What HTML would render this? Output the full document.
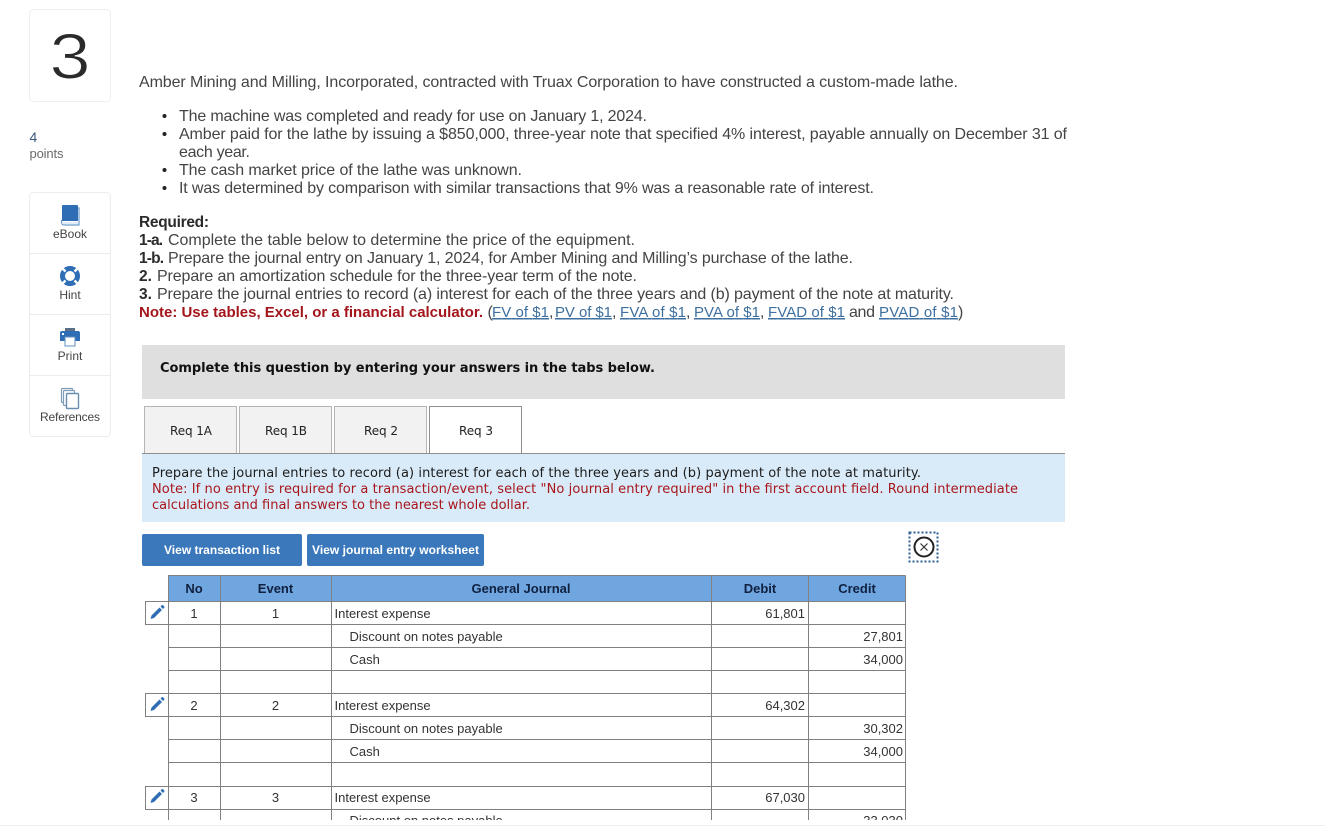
<!DOCTYPE html>
<html lang="en"><head><meta charset="utf-8"><title>Question 3</title>
<style>
html,body{margin:0;padding:0;background:#fff;width:1325px;height:826px;overflow:hidden}
svg{display:block}
.b{font:16px "Liberation Sans",sans-serif;fill:#444}
.bb{font:bold 15.500px "Liberation Sans",sans-serif;fill:#2b2b2b}
.r{font:bold 15px "Liberation Sans",sans-serif;fill:#a3161c}
.l{font:15px "Liberation Sans",sans-serif;fill:#3d6f9f;text-decoration:underline}
.s{font:12px "Liberation Sans",sans-serif;fill:#444;text-anchor:middle}
.v{font:13px "DejaVu Sans",sans-serif;fill:#222}
.q{font:12px "DejaVu Sans",sans-serif;fill:#222}
.t{font:13px "Liberation Sans",sans-serif;fill:#333}
.m{text-anchor:middle}.e{text-anchor:end}
.h{font:bold 13px "Liberation Sans",sans-serif;fill:#10203f;text-anchor:middle}
.w{font:bold 12px "Liberation Sans",sans-serif;fill:#fff}
.g{stroke:#808080;stroke-width:1;fill:none;shape-rendering:crispEdges}
</style></head><body>
<svg width="1325" height="826" viewBox="0 0 1325 826" xmlns="http://www.w3.org/2000/svg">
<defs><clipPath id="c"><rect x="140" y="570" width="780" height="250"/></clipPath></defs>

<!-- sidebar -->
<rect x="29.500" y="9.500" width="81" height="92" rx="4" fill="#fff" stroke="#efefef"/>
<text x="49.500" y="78.500" textLength="41" lengthAdjust="spacingAndGlyphs" style="font:64px 'Liberation Sans',sans-serif;fill:#2a2a2a;stroke:#fff;stroke-width:1">3</text>
<text x="29.500" y="142" style="font:14px 'Liberation Sans',sans-serif;fill:#3b5a7c">4</text>
<text x="29.500" y="158" textLength="34" style="font:13px 'Liberation Sans',sans-serif;fill:#6b6b6b">points</text>
<rect x="29.500" y="192.500" width="81" height="244" rx="4" fill="#fff" stroke="#ececec"/>
<path d="M30 253.500H110M30 314.500H110M30 375.500H110" stroke="#ececec"/>

<path d="M62 206a1 1 0 0 1 1-1h14a1 1 0 0 1 1 1v15H62z" fill="#2f6db5"/>
<path d="M78 208h1v17H64a2.500 2.500 0 0 1-2.500-2.500V220" fill="none" stroke="#6d9bcc" stroke-width="1.200"/>
<path d="M63 223h15" stroke="#c4d7ec" stroke-width="1"/>
<text class="s" x="70" y="238">eBook</text>

<circle cx="70" cy="276" r="7.500" fill="none" stroke="#2f6db5" stroke-width="5"/>
<path d="M65.500 271.500l-3.500-3.500M74.500 271.500l3.500-3.500M65.500 280.500l-3.500 3.500M74.500 280.500l3.500 3.500" stroke="#fff" stroke-width="2.400"/>
<text class="s" x="70" y="299">Hint</text>

<rect x="65" y="328" width="10" height="3" fill="#5b6f86"/>
<path d="M62 331h16a2 2 0 0 1 2 2v8h-20v-8a2 2 0 0 1 2-2z" fill="#2f6db5"/>
<rect x="65" y="337" width="10" height="9" fill="#fff" stroke="#5f8fbf"/>
<rect x="62" y="333" width="2" height="2" fill="#fff"/>
<text class="s" x="70" y="360">Print</text>

<rect x="61.500" y="388.500" width="11" height="14" rx="1" fill="#fff" stroke="#7f9db9" stroke-width="1.200"/>
<rect x="63.500" y="390.500" width="11" height="15" rx="1" fill="#fff" stroke="#7f9db9" stroke-width="1.200"/>
<rect x="66.500" y="393.500" width="12" height="15" rx="1" fill="#fff" stroke="#6a8fb2" stroke-width="1.400"/>
<text class="s" x="70" y="421" textLength="60">References</text>

<!-- intro -->
<text class="b" x="139" y="87" textLength="819">Amber Mining and Milling, Incorporated, contracted with Truax Corporation to have constructed a custom-made lathe.</text>
<circle cx="164.500" cy="116" r="2" fill="#222"/><circle cx="164.500" cy="134" r="2" fill="#222"/><circle cx="164.500" cy="170" r="2" fill="#222"/><circle cx="164.500" cy="188" r="2" fill="#222"/>
<text class="b" x="179" y="121" textLength="468">The machine was completed and ready for use on January 1, 2024.</text>
<text class="b" x="179" y="139" textLength="888">Amber paid for the lathe by issuing a $850,000, three-year note that specified 4% interest, payable annually on December 31 of</text>
<text class="b" x="179" y="157" textLength="71">each year.</text>
<text class="b" x="179" y="175" textLength="343">The cash market price of the lathe was unknown.</text>
<text class="b" x="179" y="193" textLength="695">It was determined by comparison with similar transactions that 9% was a reasonable rate of interest.</text>

<text class="bb" x="139" y="227" textLength="70">Required:</text>
<text class="bb" x="139" y="245" textLength="24">1-a.</text><text class="b" x="168" y="245" textLength="467">Complete the table below to determine the price of the equipment.</text>
<text class="bb" x="139" y="263" textLength="25">1-b.</text><text class="b" x="168" y="263" textLength="685">Prepare the journal entry on January 1, 2024, for Amber Mining and Milling’s purchase of the lathe.</text>
<text class="bb" x="139" y="281">2.</text><text class="b" x="157" y="281" textLength="480">Prepare an amortization schedule for the three-year term of the note.</text>
<text class="bb" x="139" y="299">3.</text><text class="b" x="157" y="299" textLength="797">Prepare the journal entries to record (a) interest for each of the three years and (b) payment of the note at maturity.</text>
<text class="r" x="139" y="317" textLength="344">Note: Use tables, Excel, or a financial calculator.</text>
<text class="b" x="487.500" y="317">(</text>
<text class="l" x="492" y="317" textLength="57">FV of $1</text><text class="b" x="549" y="317">,</text>
<text class="l" x="555" y="317" textLength="57">PV of $1</text><text class="b" x="612" y="317">,</text>
<text class="l" x="620" y="317" textLength="66">FVA of $1</text><text class="b" x="686" y="317">,</text>
<text class="l" x="694" y="317" textLength="66">PVA of $1</text><text class="b" x="760" y="317">,</text>
<text class="l" x="768" y="317" textLength="77">FVAD of $1</text>
<text class="b" x="849" y="317" textLength="26">and</text>
<text class="l" x="879" y="317" textLength="79">PVAD of $1</text><text class="b" x="958" y="317">)</text>

<!-- banner -->
<rect x="142" y="345" width="923" height="54" fill="#dfdfdf"/>
<text x="160" y="372" textLength="495" style="font:bold 13px 'DejaVu Sans',sans-serif;fill:#111">Complete this question by entering your answers in the tabs below.</text>

<!-- tabs -->
<g fill="#f2f2f2" stroke="#b5b5b5" shape-rendering="crispEdges">
<rect x="144.500" y="406.500" width="92" height="47"/>
<rect x="239.500" y="406.500" width="92" height="47"/>
<rect x="334.500" y="406.500" width="92" height="47"/>
</g>
<rect x="429.500" y="406.500" width="92" height="47" fill="#fff" stroke="#8f8f8f" shape-rendering="crispEdges"/>
<path d="M142 453.500H429.500M521.500 453.500H1065" stroke="#8f8f8f" shape-rendering="crispEdges"/>
<text class="q" x="170" y="435" textLength="42">Req 1A</text>
<text class="q" x="265" y="435" textLength="42">Req 1B</text>
<text class="q" x="364" y="435" textLength="34">Req 2</text>
<text class="q" x="459" y="435" textLength="34">Req 3</text>

<!-- info -->
<rect x="142" y="454" width="923" height="68" fill="#d9ebf8"/>
<text class="v" x="152" y="477" textLength="769" style="fill:#1c1c1c">Prepare the journal entries to record (a) interest for each of the three years and (b) payment of the note at maturity.</text>
<text class="v" x="152" y="493" textLength="866" style="fill:#a8161c">Note: If no entry is required for a transaction/event, select "No journal entry required" in the first account field. Round intermediate</text>
<text class="v" x="152" y="509" textLength="378" style="fill:#a8161c">calculations and final answers to the nearest whole dollar.</text>

<!-- buttons -->
<rect x="142" y="534" width="160" height="32" rx="2" fill="#3a78bb"/>
<rect x="307" y="534" width="177" height="32" rx="2" fill="#3a78bb"/>
<text class="w" x="164" y="554" textLength="116">View transaction list</text>
<text class="w" x="312" y="554" textLength="167">View journal entry worksheet</text>

<!-- close -->
<rect x="909.500" y="532.500" width="28" height="29" fill="none" stroke="#2f5f8c" stroke-width="2" stroke-dasharray="2 2"/>
<circle cx="924" cy="547" r="9.500" fill="none" stroke="#222" stroke-width="2"/>
<path d="M920.500 543.500l7 7M927.500 543.500l-7 7" stroke="#333" stroke-width="1.200"/>

<!-- table -->
<g clip-path="url(#c)">
<rect x="168" y="575" width="737" height="26" fill="#6fa6e0"/>
<path class="g" d="M168.500 575.500H905.500M168.500 601.500H905.500M168.500 624.500H905.500M168.500 647.500H905.500M168.500 670.500H905.500M168.500 693.500H905.500M168.500 716.500H905.500M168.500 739.500H905.500M168.500 762.500H905.500M168.500 786.500H905.500M168.500 809.500H905.500"/>
<path class="g" d="M168.500 575.500V830M220.500 575.500V830M331.500 575.500V830M711.500 575.500V830M808.500 575.500V830M905.500 575.500V830"/>
<path class="g" d="M168.500 601.500H145.500V624.500H168.500M168.500 693.500H145.500V716.500H168.500M168.500 786.500H145.500V809.500H168.500"/>

<g fill="#2f6db5">
<path d="M151.500 615.500l8-8 2.500 2.500-8 8-3.500 1z"/><path d="M160.500 606.500l1.200-1.200a1 1 0 0 1 1.400 0l1.100 1.100a1 1 0 0 1 0 1.400l-1.200 1.200z"/>
<path d="M151.500 707.500l8-8 2.500 2.500-8 8-3.500 1z"/><path d="M160.500 698.500l1.200-1.200a1 1 0 0 1 1.400 0l1.100 1.100a1 1 0 0 1 0 1.400l-1.200 1.200z"/>
<path d="M151.500 799.500l8-8 2.500 2.500-8 8-3.500 1z"/><path d="M160.500 790.500l1.200-1.200a1 1 0 0 1 1.400 0l1.100 1.100a1 1 0 0 1 0 1.400l-1.200 1.200z"/>
</g>

<text class="h" x="194" y="593">No</text><text class="h" x="275.500" y="593">Event</text><text class="h" x="521" y="593">General Journal</text><text class="h" x="760" y="593">Debit</text><text class="h" x="857" y="593">Credit</text>

<text class="t m" x="194" y="618">1</text><text class="t m" x="275.500" y="618">1</text><text class="t" x="334.500" y="618">Interest expense</text><text class="t e" x="805" y="618">61,801</text>
<text class="t" x="349.500" y="641">Discount on notes payable</text><text class="t e" x="903" y="641">27,801</text>
<text class="t" x="349.500" y="664">Cash</text><text class="t e" x="903" y="664">34,000</text>

<text class="t m" x="194" y="710">2</text><text class="t m" x="275.500" y="710">2</text><text class="t" x="334.500" y="710">Interest expense</text><text class="t e" x="805" y="710">64,302</text>
<text class="t" x="349.500" y="733">Discount on notes payable</text><text class="t e" x="903" y="733">30,302</text>
<text class="t" x="349.500" y="756">Cash</text><text class="t e" x="903" y="756">34,000</text>

<text class="t m" x="194" y="802">3</text><text class="t m" x="275.500" y="802">3</text><text class="t" x="334.500" y="802">Interest expense</text><text class="t e" x="805" y="802">67,030</text>
<text class="t" x="349.500" y="825">Discount on notes payable</text><text class="t e" x="903" y="825">33,030</text>
</g>

<rect x="0" y="825" width="1325" height="1" fill="#eeeeee"/>
</svg>
</body></html>
